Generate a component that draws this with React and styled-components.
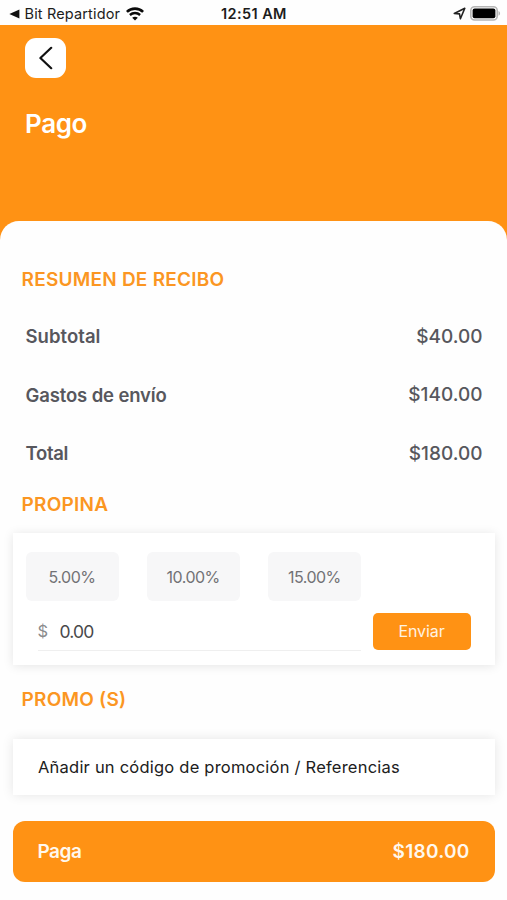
import React, { useState } from 'react'
import styled, { createGlobalStyle } from 'styled-components'

const tips = ['5.00%', '10.00%', '15.00%']

const receipt = [
    { label: 'Subtotal', amount: '$40.00', spacing: '0.05px' },
    { label: 'Gastos de envío', amount: '$140.00', spacing: '-0.13px' },
    { label: 'Total', amount: '$180.00', spacing: '-0.3px' },
]

function App() {
    const [tip, setTip] = useState('0.00')

    return (
        <Screen>
            <GlobalStyle />
            <StatusBar>
                <StatusLeft>
                    <svg width="11" height="10" viewBox="0 0 11 10">
                        <path d="M0.4 5 L10.4 0.4 V9.6 Z" fill="#111" />
                    </svg>
                    <BackApp>Bit Repartidor</BackApp>
                    <svg width="18" height="14" viewBox="0 0 18 14" fill="none" stroke="#0a0a0a">
                        <path d="M0.9 4.9 C5.4 0.5 12.6 0.5 17.1 4.9" strokeWidth="2.6" />
                        <path d="M3.9 8 C6.8 5.3 11.2 5.3 14.1 8" strokeWidth="2.4" />
                        <path d="M9 13.6 L6.2 10.8 C7.8 9.5 10.2 9.5 11.8 10.8 Z" fill="#0a0a0a" stroke="none" />
                    </svg>
                </StatusLeft>
                <Clock>12:51 AM</Clock>
                <StatusRight>
                    <svg width="13" height="13" viewBox="0 0 13 13" fill="none" stroke="#222" strokeWidth="1.6" strokeLinejoin="round">
                        <path d="M1.3 6.5 L11.8 1.3 L7.4 11.7 L6.5 6.9 Z" />
                    </svg>
                    <svg width="31" height="15" viewBox="0 0 31 15">
                        <rect x="0.8" y="0.8" width="26.4" height="13.2" rx="3.8" fill="#fff" stroke="#b5b5b5" strokeWidth="1.6" />
                        <rect x="2.6" y="2.6" width="22.8" height="9.6" rx="2" fill="#000" />
                        <path d="M28.5 5 C30.6 6 30.6 8.8 28.5 9.8 Z" fill="#b5b5b5" />
                    </svg>
                </StatusRight>
            </StatusBar>

            <Header>
                <BackButton aria-label="Atrás">
                    <svg width="14" height="24" viewBox="0 0 14 24" fill="none" stroke="#111" strokeWidth="2.2" strokeLinecap="round" strokeLinejoin="round">
                        <path d="M12.2 1.8 L1.4 12 L12.2 22.2" />
                    </svg>
                </BackButton>
                <Title>Pago</Title>
            </Header>

            <Sheet>
                <SectionTitle>RESUMEN DE RECIBO</SectionTitle>
                <Receipt>
                    {receipt.map((row) => (
                        <ReceiptRow key={row.label}>
                            <Label $spacing={row.spacing}>{row.label}</Label>
                            <Amount>{row.amount}</Amount>
                        </ReceiptRow>
                    ))}
                </Receipt>

                <SectionTitle>PROPINA</SectionTitle>
                <TipCard>
                    <Chips>
                        {tips.map((value) => (
                            <Chip key={value}>{value}</Chip>
                        ))}
                    </Chips>
                    <TipForm>
                        <Field>
                            <Currency>$</Currency>
                            <TipInput value={tip} onChange={(e) => setTip(e.target.value)} />
                        </Field>
                        <SendButton>Enviar</SendButton>
                    </TipForm>
                </TipCard>

                <SectionTitle>PROMO (S)</SectionTitle>
                <PromoCard>Añadir un código de promoción / Referencias</PromoCard>

                <PayButton>
                    <PayLabel>Paga</PayLabel>
                    <PayAmount>$180.00</PayAmount>
                </PayButton>
            </Sheet>
        </Screen>
    )
}

export default App

const GlobalStyle = createGlobalStyle`
    * {
        box-sizing: border-box;
    }
    body {
        margin: 0;
        background: #fefefe;
        font-family: Inter, "Liberation Sans", sans-serif;
    }
    button, input {
        font-family: inherit;
        border: none;
        padding: 0;
    }
`
const Screen = styled.div`
    width: 507px;
    height: 900px;
    overflow: hidden;
    display: flex;
    flex-direction: column;
    background: #ff9214;
`
const StatusBar = styled.div`
    display: grid;
    grid-template-columns: 1fr auto 1fr;
    align-items: center;
    height: 25.4px;
    padding: 2px 6px 0 9px;
    background: #fefefe;
    color: #1c1c1c;
    font-size: 14.5px;
`
const StatusLeft = styled.div`
    display: flex;
    align-items: center;
`
const BackApp = styled.span`
    margin: 0 6px 0 4.5px;
    white-space: nowrap;
    letter-spacing: 0.15px;
`
const Clock = styled.span`
    margin-right: 2px;
    font-weight: 600;
    white-space: nowrap;
    letter-spacing: 0.4px;
`
const StatusRight = styled.div`
    display: flex;
    align-items: center;
    justify-content: flex-end;
    gap: 4px;
`
const Header = styled.header`
    height: 195.6px;
    padding: 12.6px 25px 0;
`
const BackButton = styled.button`
    display: flex;
    align-items: center;
    justify-content: center;
    width: 41px;
    height: 40px;
    border-radius: 11px;
    background: #fff;
`
const Title = styled.h1`
    margin: 31px 0 0;
    color: #fff;
    font-size: 26px;
    line-height: 30px;
    font-weight: 600;
    letter-spacing: -0.4px;
`
const Sheet = styled.main`
    flex: 1;
    display: flex;
    flex-direction: column;
    padding: 44px 12.5px 0 13px;
    border-radius: 19px 19px 0 0;
    background: #fefefe;
`
const SectionTitle = styled.h2`
    margin: 0 0 0 8.5px;
    color: #fb9622;
    font-size: 19px;
    line-height: 30px;
    font-weight: 600;
    letter-spacing: 0.24px;
`
const Receipt = styled.div`
    display: flex;
    flex-direction: column;
    margin: 12px 12px 7.5px 12.5px;
`
const ReceiptRow = styled.div`
    display: flex;
    align-items: center;
    justify-content: space-between;
    height: 58.5px;
    color: #57575d;
    font-size: 18.5px;
`
const Label = styled.span`
    font-weight: 600;
    letter-spacing: ${({ $spacing }) => $spacing};
`
const Amount = styled.span`
    font-size: 19px;
    font-weight: 500;
`
const TipCard = styled.section`
    height: 132px;
    margin: 13px 0 20px;
    padding: 19px 24px 0 12.5px;
    background: #fff;
    box-shadow: 0 1px 10px rgba(0, 0, 0, 0.1);
`
const Chips = styled.div`
    display: flex;
    gap: 28.2px;
`
const Chip = styled.button`
    width: 93px;
    height: 49px;
    padding-top: 1px;
    border-radius: 6px;
    background: #f7f7f8;
    color: #727275;
    font-size: 16px;
    letter-spacing: -0.5px;
`
const TipForm = styled.div`
    display: flex;
    gap: 12px;
    margin: 12px 0 0 12px;
`
const Field = styled.label`
    flex: 1;
    display: flex;
    align-items: center;
    height: 38px;
    border-bottom: 1.5px solid #efefef;
`
const Currency = styled.span`
    width: 22px;
    color: #8b8b8d;
    font-size: 16.5px;
`
const TipInput = styled.input`
    flex: 1;
    min-width: 0;
    height: 34px;
    outline: none;
    background: transparent;
    color: #48484a;
    font-size: 17.5px;
    letter-spacing: -0.8px;
`
const SendButton = styled.button`
    width: 98px;
    height: 37px;
    border-radius: 5px;
    background: #ff9214;
    color: #fff3e2;
    font-size: 16px;
    letter-spacing: -0.1px;
`
const PromoCard = styled.section`
    display: flex;
    align-items: center;
    height: 56px;
    margin: 23.6px 0 26.4px;
    padding-left: 25px;
    background: #fff;
    box-shadow: 0 0 11px rgba(0, 0, 0, 0.1);
    color: #202020;
    font-size: 16.5px;
    letter-spacing: 0.22px;
    white-space: nowrap;
`
const PayButton = styled.button`
    display: flex;
    align-items: center;
    justify-content: space-between;
    height: 61px;
    padding: 0 25px 0 24.5px;
    border-radius: 12px;
    background: #ff9214;
    color: #fff8ee;
    font-size: 19px;
    font-weight: 600;
`
const PayLabel = styled.span`
    letter-spacing: -0.5px;
`
const PayAmount = styled.span`
    letter-spacing: 0.25px;
`
